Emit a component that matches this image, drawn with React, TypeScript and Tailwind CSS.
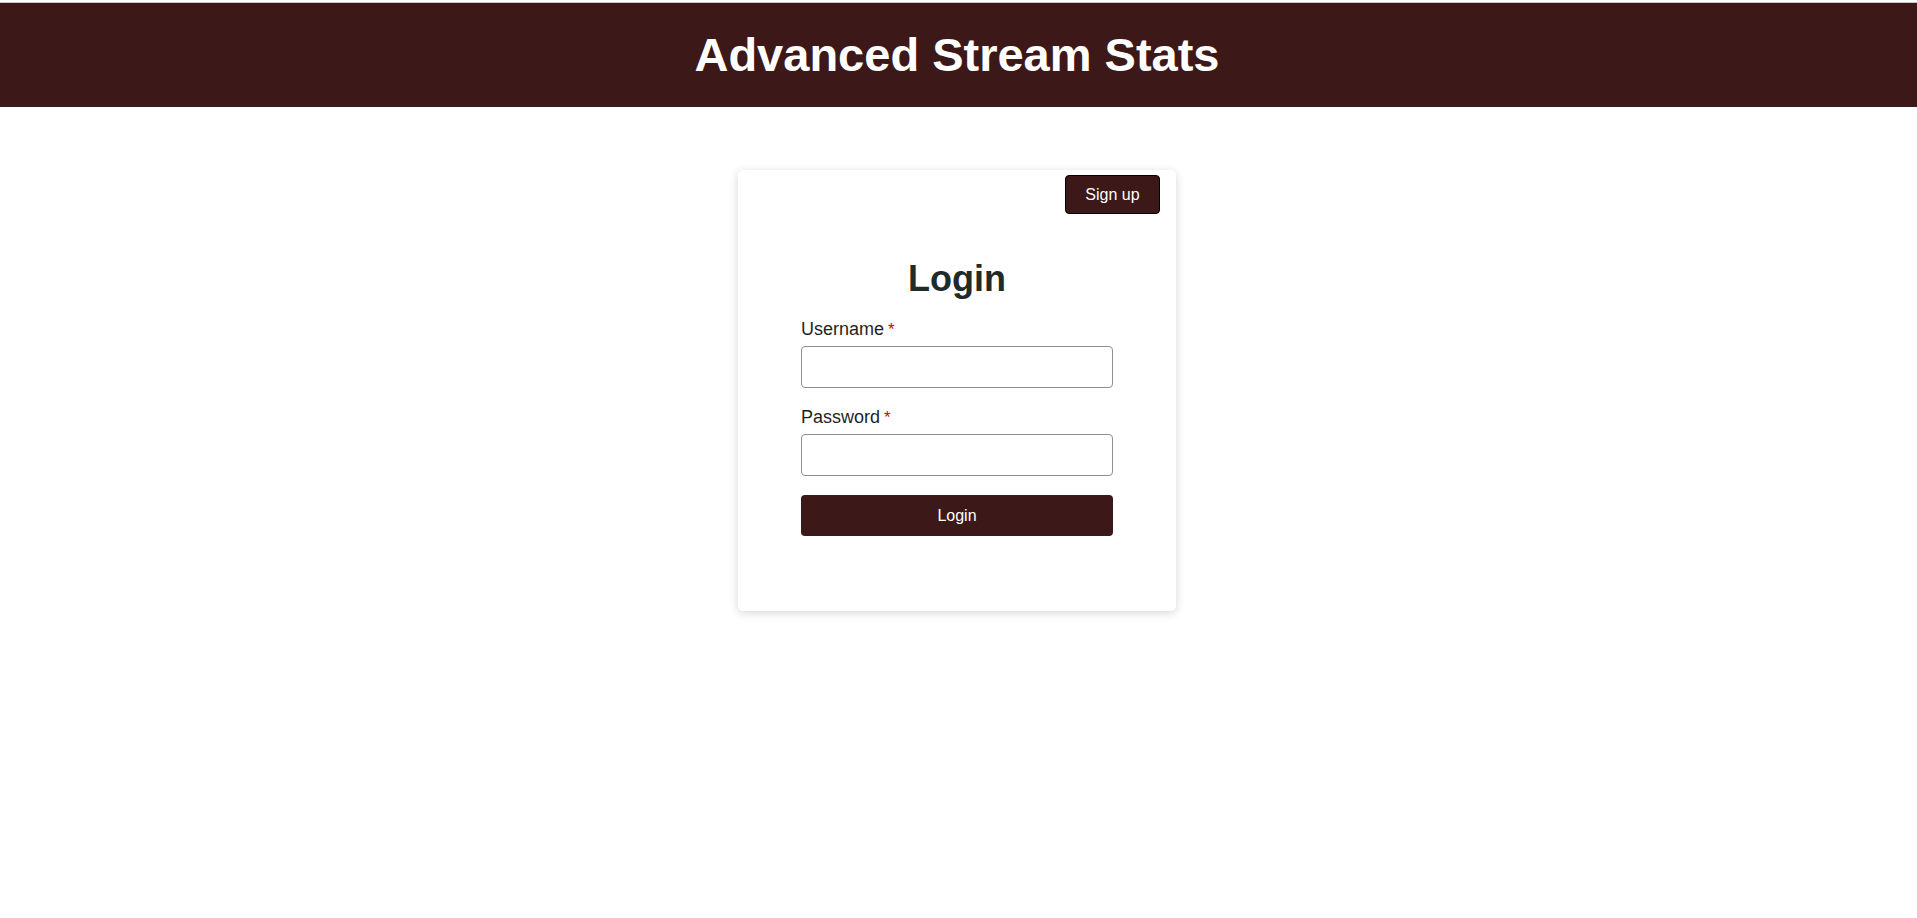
function Field({ label, type }: { label: string; type: string }) {
  return (
    <>
      <label className="mt-[17px] block text-[18px] leading-[24px] text-[#1f1f1f]">
        {label}
        <span className="ml-[4px] text-[17px] leading-none text-[#e00000]">*</span>
      </label>
      <input
        type={type}
        className="mt-[5px] block h-[42px] w-full rounded-[4px] border border-[#8f8f8f] bg-white px-2"
      />
    </>
  );
}

export default function App() {
  return (
    <div className="min-h-[918px] bg-white font-['Liberation_Sans',Arial,sans-serif]">
      <div className="h-[2px] bg-white" />
      <div className="h-px bg-[#c9c9cc]" />
      <header className="bg-[#3d1818] py-[25px] pr-[3px] text-center">
        <h1 className="text-[47px] font-bold leading-[54px] text-white">
          Advanced Stream Stats
        </h1>
      </header>

      <div className="flex justify-center pr-[3px]">
        <div className="mt-[63px] w-[438px] rounded-[5px] bg-white pb-[75px] pt-[5px] shadow-[0_2px_10px_rgba(0,0,0,0.16)]">
          <div className="flex justify-end pr-[16px]">
            <button className="h-[39px] w-[95px] rounded-[4px] border border-black bg-[#3d1818] text-[16px] text-white">
              Sign up
            </button>
          </div>

          <div className="mx-auto mt-[44px] w-[312px]">
            <h2 className="text-center text-[36px] font-bold leading-[42px] text-[#1f2a2a]">
              Login
            </h2>

            <Field label="Username" type="text" />
            <Field label="Password" type="password" />

            <button className="mt-[19px] h-[41px] w-full rounded-[4px] bg-[#3d1818] text-[16px] text-white">
              Login
            </button>
          </div>
        </div>
      </div>
    </div>
  );
}
